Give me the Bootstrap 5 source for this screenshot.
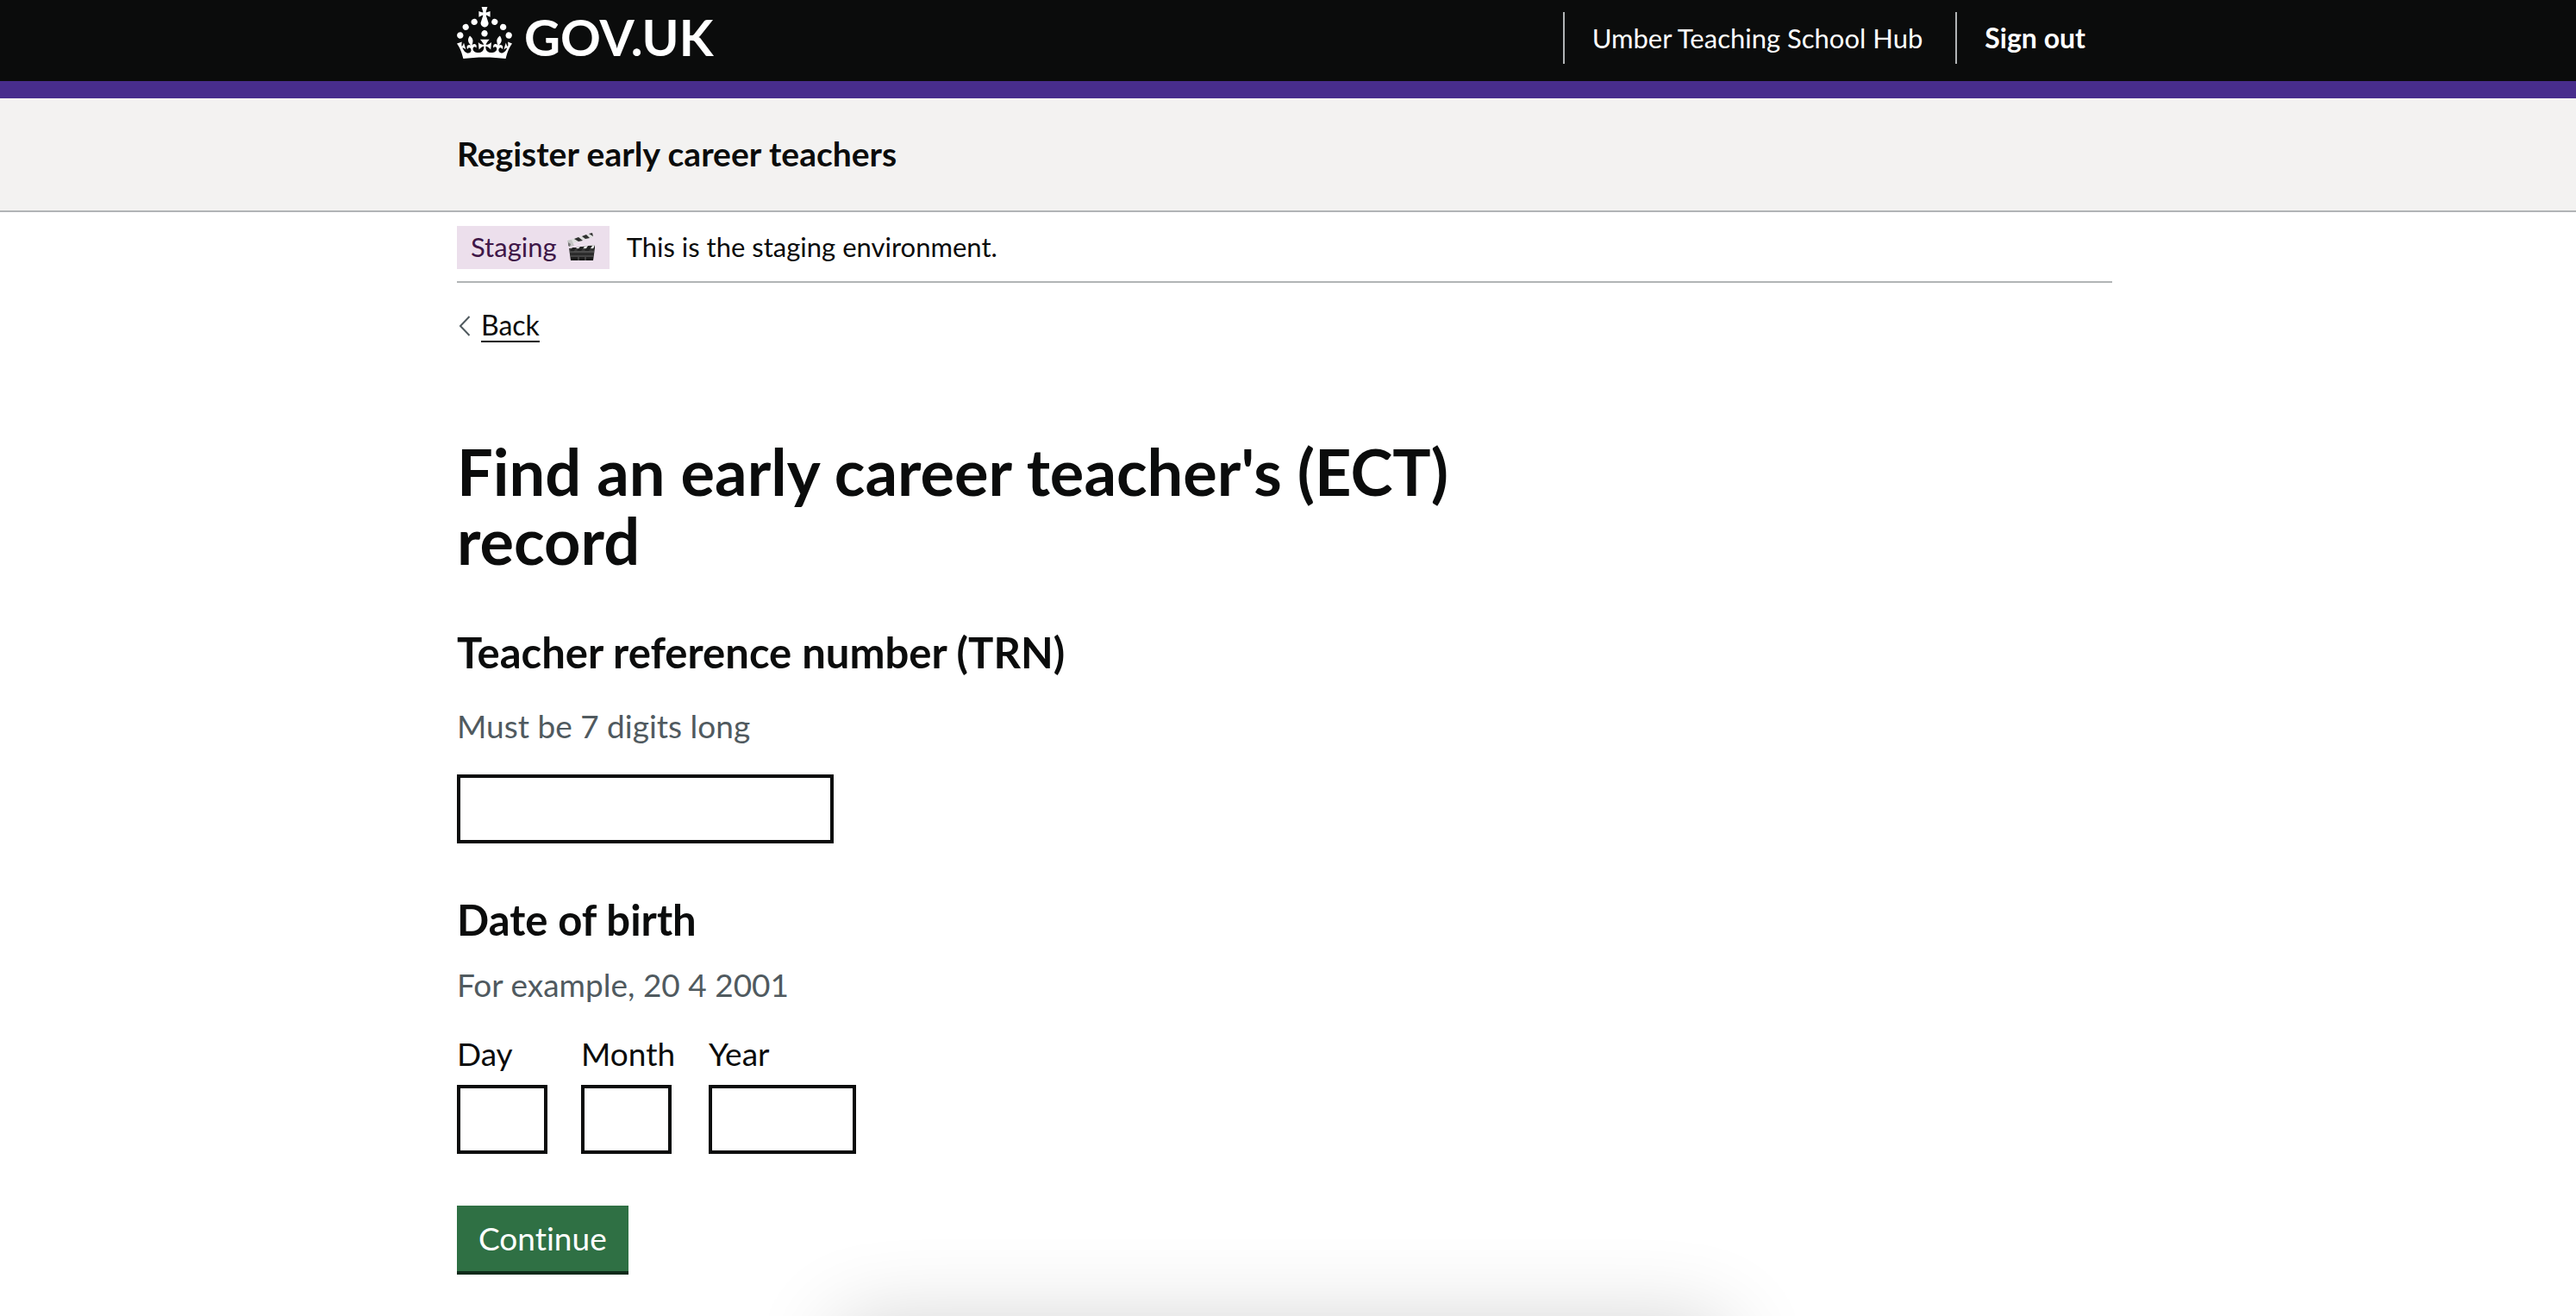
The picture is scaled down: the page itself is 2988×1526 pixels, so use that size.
<!DOCTYPE html>
<html lang="en">
<head>
<meta charset="utf-8">
<meta name="viewport" content="width=device-width, initial-scale=1">
<title>Find an early career teacher's (ECT) record</title>
<link rel="stylesheet" href="https://cdn.jsdelivr.net/npm/bootstrap@5.3.0/dist/css/bootstrap.min.css">
<style>
  :root { --ink: #0b0c0c; --rule: #b1b4b6; --hint: #505a5f; }
  body { font-family: Lato, "Liberation Sans", sans-serif; font-size: 37px; line-height: 50px; color: var(--ink); background: #fff; min-height: 100vh; }
  body, .btn { font-variant-ligatures: none; }
  .band { padding-left: 30px; padding-right: 38px; }
  .page-width { max-width: 1920px; margin-left: auto; margin-right: auto; }
  .text-compact { font-size: 31px; line-height: 36px; }

  .top-bar { background: var(--ink); border-bottom: 20px solid #482d8c; }
  .top-bar .page-width { min-height: 94px; }
  .top-bar a { color: #fff; text-decoration: none; }
  .crown { width: 64px; height: 60px; fill: #fff; }
  .wordmark { font-size: 58px; line-height: 60px; font-weight: 700; padding: 5px 0 0 14px; }
  .account-nav { padding-top: 14px; }
  .account-item { border-left: 2px solid var(--rule); padding: 12px 38px 12px 32px; }
  .account-item.sign-out { font-size: 32px; font-weight: 700; padding-right: 31px; }

  .service-bar { background: #f3f2f1; border-bottom: 2px solid var(--rule); }
  .service-bar .page-width { min-height: 130px; padding-bottom: 2px; }
  .service-bar a { color: var(--ink); text-decoration: none; font-size: 39px; font-weight: 700; }

  .phase { padding: 16px 0 14px; border-bottom: 2px solid var(--rule); gap: 20px; }
  .phase-tag { background: #ecdfec; color: #3f1748; padding: 6px 16px 8px; gap: 11px; }
  .phase-text { padding-bottom: 3px; }
  .clapper { width: 34px; height: 34px; }

  .back { margin-top: 31px; gap: 12px; color: var(--ink); text-decoration: none; padding-left: 2px; }
  .back svg { width: 14px; height: 24px; }
  .back-text { font-size: 32px; border-bottom: 2px solid var(--ink); }

  h1 { font-size: 74px; line-height: 80px; font-weight: 700; margin: 110px 0 59px; }
  .question { display: block; float: none; width: auto; font-size: 49px; line-height: 60px; font-weight: 700; margin: 0; }
  .hint-text { color: var(--hint); }
  .form-control { height: 80px; border: 4px solid var(--ink); border-radius: 0; padding: 8px; font-size: 37px; color: var(--ink); }
  .w-trn { width: 437px; }
  .w-two { width: 105px; }
  .w-four { width: 171px; }
  .trn-group .hint-text { margin: 31px 0; }
  .dob-group { margin: 58px 0 60px; }
  .dob-group .hint-text { margin: 21px 0 30px; }
  .date-parts { gap: 39px; }
  .date-parts label { display: block; margin-bottom: 11px; }
  .btn-continue { background: #2f7044; color: #fff; border: 0; border-radius: 0; box-shadow: 0 4px 0 #0f2b1a; font-size: 37px; line-height: 50px; padding: 13px 25px; }
  .btn-continue:hover { background: #265a36; color: #fff; }

  /* soft shadow of the panel docked under the page */
  .dock { position: fixed; left: 50%; bottom: -208px; width: 1030px; height: 200px; margin-left: -522px; border-radius: 20px; box-shadow: 0 0 100px rgba(0,0,0,.19); pointer-events: none; }
</style>
<script src="https://cdn.jsdelivr.net/npm/bootstrap@5.3.0/dist/js/bootstrap.bundle.min.js"></script>
</head>
<body>
<header class="top-bar band">
  <div class="page-width d-flex justify-content-between">
    <a href="#" class="d-flex align-items-start pt-2" aria-label="GOV.UK">
      <svg class="crown" viewBox="0 0 32 30" aria-hidden="true"><path d="M22.6 10.4c-1 .4-2-.1-2.4-1-.4-.9.1-2 1-2.4.9-.4 2 .1 2.4 1s-.1 2-1 2.4m-5.9 6.7c-.9.4-2-.1-2.4-1-.4-.9.1-2 1-2.4.9-.4 2 .1 2.4 1s-.1 2-1 2.4m10.8-3.7c-1 .4-2-.1-2.4-1-.4-.9.1-2 1-2.4.9-.4 2 .1 2.4 1s0 2-1 2.4m3.3 4.8c-1 .4-2-.1-2.4-1-.4-.9.1-2 1-2.4.9-.4 2 .1 2.4 1s-.1 2-1 2.4M17 4.7l2.3 1.2V2.5l-2.3.7-.2-.2.9-3h-3.4l.9 3-.2.2c-.1.1-2.3-.7-2.3-.7v3.4L15 4.7c.1.1.1.2.2.2l-1.3 4c-.1.2-.1.4-.1.6 0 1.1.8 2 1.9 2.2h.7c1-.2 1.9-1.1 1.9-2.1 0-.2 0-.4-.1-.6l-1.3-4c-.1-.2 0-.2.1-.3m-7.6 5.7c.9.4 2-.1 2.4-1 .4-.9-.1-2-1-2.4-.9-.4-2 .1-2.4 1s0 2 1 2.4m-5 3c.9.4 2-.1 2.4-1 .4-.9-.1-2-1-2.4-.9-.4-2 .1-2.4 1s.1 2 1 2.4m-3.2 4.8c.9.4 2-.1 2.4-1 .4-.9-.1-2-1-2.4-.9-.4-2 .1-2.4 1s0 2 1 2.4m14.8 11c4.4 0 8.6.3 12.3.8 1.1-4.5 2.4-7 3.7-8.8l-2.5-.9c.2 1.3.3 1.9 0 2.7-.4-.4-.8-1.1-1.1-2.3l-1.2 4c.7-.5 1.3-.8 2-.9-1.1 2.5-2.6 3.1-3.5 3-1.1-.2-1.7-1.2-1.5-2.1.3-1.2 1.5-1.5 2.1-.1 1.1-2.3-.8-3-2-2.3 1.9-1.9 2.1-3.5.6-5.6-2.1 1.6-2.1 3.2-1.2 5.5-1.2-1.4-3.2-.6-2.5 1.6.9-1.4 2.1-.5 1.9.8-.2 1.1-1.7 2.1-3.5 1.9-2.7-.2-2.9-2.1-2.9-3.6.7-.1 1.9.5 2.9 1.9l.4-4.3c-1.1 1.1-2.1 1.4-3.2 1.4.4-1.2 2.1-3 2.1-3h-5.4s1.7 1.9 2.1 3c-1.1 0-2.1-.2-3.2-1.4l.4 4.3c1-1.4 2.2-2 2.9-1.9-.1 1.5-.2 3.4-2.9 3.6-1.9.2-3.4-.8-3.5-1.9-.2-1.3 1-2.2 1.9-.8.7-2.3-1.2-3-2.5-1.6.9-2.2.9-3.9-1.2-5.5-1.5 2-1.3 3.7.6 5.6-1.2-.7-3.1 0-2 2.3.6-1.4 1.8-1.1 2.1.1.2.9-.3 1.9-1.5 2.1-.9.2-2.4-.5-3.5-3 .6 0 1.2.3 2 .9l-1.2-4c-.3 1.1-.7 1.9-1.1 2.3-.3-.8-.2-1.4 0-2.7l-2.9.9C1.3 23 2.6 25.5 3.7 30c3.7-.5 7.9-.8 12.3-.8"/></svg>
      <span class="wordmark">GOV.UK</span>
    </a>
    <nav class="d-flex align-items-start text-compact account-nav" aria-label="Account">
      <a href="#" class="account-item">Umber Teaching School Hub</a>
      <a href="#" class="account-item sign-out">Sign out</a>
    </nav>
  </div>
</header>
<div class="service-bar band">
  <div class="page-width d-flex align-items-center"><a href="#">Register early career teachers</a></div>
</div>
<div class="band">
  <div class="page-width">
    <div class="phase d-flex align-items-center text-compact">
      <strong class="phase-tag d-inline-flex align-items-center fw-normal">Staging
        <svg class="clapper" viewBox="0 0 34 34" role="img" aria-label="clapper board">
          <defs><linearGradient id="slate" x1="0" y1="0" x2="0" y2="1"><stop offset="0" stop-color="#4a4a4a"/><stop offset="1" stop-color="#161616"/></linearGradient></defs>
          <path d="M1 10 30 1l1 5L2 15z" fill="#dedede"/>
          <path d="M9 8l5-2 5 4-5 1zM18 5l5-2 4 4-5 1zM26 2l4-1 1 4z" fill="#303030"/>
          <path d="M1 10l5-1 3 7-6 1z" fill="#c4c4c4"/><path d="M2 12l3 2-1 3-2-1z" fill="#777"/>
          <path d="M3 19 33 15v4l-2 14H5z" fill="url(#slate)"/>
          <path d="M3 19l30-4v4H4z" fill="#eee"/>
          <path d="M7 18h5l-4 5H4zM16 17h5l-4 5h-5zM25 16h5l-4 6h-5zM33 15v4l-3 3z" fill="#222"/>
          <path d="M4 23h28M5 28h26M14 29v4M22 29v4" stroke="#777" stroke-width=".8" fill="none"/>
        </svg></strong>
      <span class="phase-text">This is the staging environment.</span>
    </div>
    <a href="#" class="back d-inline-flex align-items-center text-compact align-top">
      <svg viewBox="0 0 14 24" fill="none" stroke="#505a5f" stroke-width="2" aria-hidden="true"><path d="M12.500 1 2 12l10.500 11"/></svg>
      <span class="back-text">Back</span>
    </a>
    <main class="row">
      <div class="col-8">
        <h1>Find an early career teacher's (ECT) record</h1>
        <form>
          <div class="trn-group">
            <label class="question" for="trn">Teacher reference number (TRN)</label>
            <div class="hint-text" id="trn-hint">Must be 7 digits long</div>
            <input class="form-control w-trn" id="trn" type="text" inputmode="numeric" aria-describedby="trn-hint">
          </div>
          <fieldset class="dob-group" aria-describedby="dob-hint">
            <legend class="question">Date of birth</legend>
            <div class="hint-text" id="dob-hint">For example, 20 4 2001</div>
            <div class="date-parts d-flex">
              <div><label for="day">Day</label><input class="form-control w-two" id="day" type="text" inputmode="numeric"></div>
              <div><label for="month">Month</label><input class="form-control w-two" id="month" type="text" inputmode="numeric"></div>
              <div><label for="year">Year</label><input class="form-control w-four" id="year" type="text" inputmode="numeric"></div>
            </div>
          </fieldset>
          <button type="submit" class="btn btn-continue">Continue</button>
        </form>
      </div>
    </main>
  </div>
</div>
<div class="dock" aria-hidden="true"></div>
</body>
</html>
